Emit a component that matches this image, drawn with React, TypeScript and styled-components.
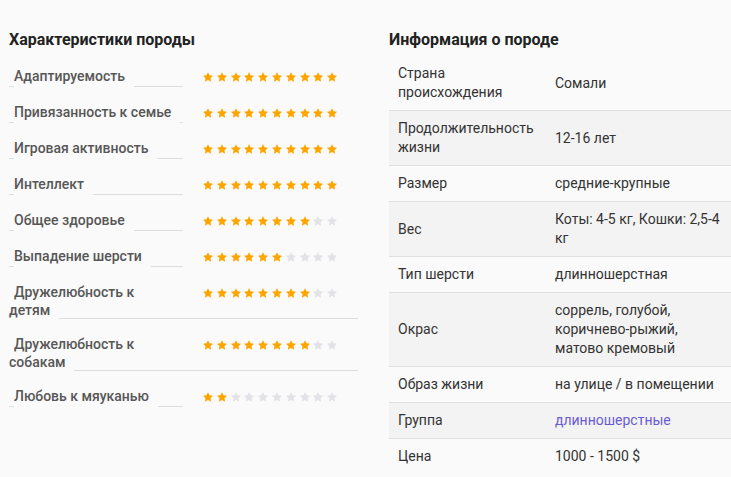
import * as React from 'react';
import styled, { createGlobalStyle } from 'styled-components';

type Trait = { name: string; score: number };
type Info = { label: string; value: string; link?: boolean };

const traits: Trait[] = [
  { name: 'Адаптируемость', score: 10 },
  { name: 'Привязанность к семье', score: 10 },
  { name: 'Игровая активность', score: 10 },
  { name: 'Интеллект', score: 10 },
  { name: 'Общее здоровье', score: 8 },
  { name: 'Выпадение шерсти', score: 6 },
  { name: 'Дружелюбность к детям', score: 8 },
  { name: 'Дружелюбность к собакам', score: 8 },
  { name: 'Любовь к мяуканью', score: 2 },
];

const info: Info[] = [
  { label: 'Страна происхождения', value: 'Сомали' },
  { label: 'Продолжительность жизни', value: '12-16 лет' },
  { label: 'Размер', value: 'средние-крупные' },
  { label: 'Вес', value: 'Коты: 4-5 кг, Кошки: 2,5-4 кг' },
  { label: 'Тип шерсти', value: 'длинношерстная' },
  { label: 'Окрас', value: 'соррель, голубой, коричнево-рыжий, матово кремовый' },
  { label: 'Образ жизни', value: 'на улице / в помещении' },
  { label: 'Группа', value: 'длинношерстные', link: true },
  { label: 'Цена', value: '1000 - 1500 $' },
];

const GlobalStyle = createGlobalStyle`
  html, body {
    margin: 0;
    background: #fafafa;
  }
  body {
    font-family: Roboto, 'Noto Sans', 'Liberation Sans', sans-serif;
  }
`;

const Page = styled.div`
  display: grid;
  grid-template-columns: 349px 342px;
  column-gap: 31px;
  align-items: start;
  width: 731px;
  box-sizing: border-box;
  padding: 30px 0 0 9px;
`;

const Title = styled.h2`
  margin: 0;
  font-size: 16px;
  line-height: 20px;
  font-weight: 700;
  color: #222;
`;

const TraitList = styled.div`
  display: flex;
  flex-direction: column;
  gap: 16px;
  margin-top: 17px;
`;

// the leader line runs along the row bottom; label and stars hide the parts they cover
const TraitRow = styled.div`
  display: flow-root;
  font-size: 14px;
  line-height: 18px;
  font-weight: 500;
  color: #575757;
  text-indent: 5px;
  background: linear-gradient(#dedede, #dedede) left bottom / 100% 1px no-repeat;
`;

const TraitName = styled.span`
  background: #fafafa;
  padding: 0 9px 4px 0;
`;

const Stars = styled.div`
  float: right;
  width: 175px;
  height: 20px;
  box-sizing: border-box;
  padding-left: 20px;
  display: flex;
  align-items: center;
  gap: 3.8px;
  text-indent: 0;
  background: #fafafa;
`;

const Star = styled.svg<{ $on: boolean }>`
  width: 10px;
  height: 10px;
  flex: none;
  fill: ${(p) => (p.$on ? '#ffa500' : '#e2e2e7')};
`;

const InfoTable = styled.table`
  margin-top: 6px;
  width: 100%;
  border-collapse: collapse;
  table-layout: fixed;
  font-size: 14px;
  line-height: 19px;
  color: #333;
`;

const InfoRow = styled.tr`
  &:nth-child(even) {
    background: #f3f3f3;
  }
  &:not(:last-child) td {
    border-bottom: 1px solid #e0e0e0;
  }
`;

const Cell = styled.td<{ $label?: boolean }>`
  box-sizing: border-box;
  width: ${(p) => (p.$label ? '157px' : 'auto')};
  padding: 8px 9px;
  vertical-align: middle;
  text-align: left;
`;

const Link = styled.a`
  color: #6a5bd4;
  text-decoration: none;
`;

const StarIcon = ({ on }: { on: boolean }) => (
  <Star $on={on} viewBox="2 2 20 19.2">
    <path d="M12 2l3.09 6.26L22 9.27l-5 4.87 1.18 6.88L12 17.77l-6.18 3.25L7 14.14 2 9.27l6.91-1.01L12 2z" />
  </Star>
);

export default function App() {
  return (
    <>
      <GlobalStyle />
      <Page>
        <section>
          <Title>Характеристики породы</Title>
          <TraitList>
            {traits.map((t) => (
              <TraitRow key={t.name}>
                <Stars>
                  {Array.from({ length: 10 }, (_, i) => (
                    <StarIcon key={i} on={i < t.score} />
                  ))}
                </Stars>
                <TraitName>{t.name}</TraitName>
              </TraitRow>
            ))}
          </TraitList>
        </section>
        <section>
          <Title>Информация о породе</Title>
          <InfoTable>
            <tbody>
              {info.map((r) => (
                <InfoRow key={r.label}>
                  <Cell $label>{r.label}</Cell>
                  <Cell>{r.link ? <Link href="#">{r.value}</Link> : r.value}</Cell>
                </InfoRow>
              ))}
            </tbody>
          </InfoTable>
        </section>
      </Page>
    </>
  );
}
